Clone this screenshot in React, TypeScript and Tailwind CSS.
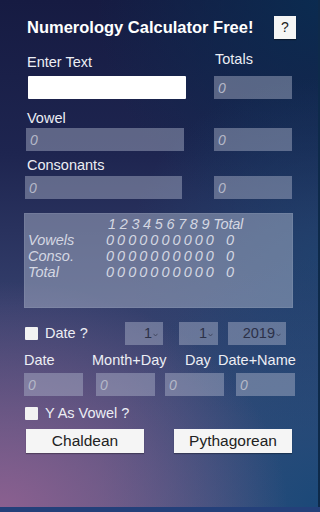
import React from "react";

const Field = ({ w, className = "" }: { w: string; className?: string }) => (
  <div className={`${w} h-[23px] bg-[rgba(175,182,205,0.45)] flex items-center pl-[4px] ${className}`}>
    <span className="italic text-[14px] text-[#b4b8c8] leading-none">0</span>
  </div>
);

const Check = () => <div className="w-[13px] h-[13px] bg-[#f2f2f2] rounded-[1px]" />;

const Drop = ({ w, v, className = "" }: { w: string; v: string; className?: string }) => (
  <div className={`${w} h-[23px] bg-[rgba(175,182,205,0.45)] flex items-center justify-end pr-[5px] ${className}`}>
    <span className="text-[14.5px] text-[#2c3148] leading-none">{v}</span>
    <svg width="5" height="4" viewBox="0 0 5 4" className="ml-[1px] mt-[2px]">
      <path d="M0.5 0.8 L2.5 3 L4.5 0.8" stroke="#3a3f55" strokeWidth="0.8" fill="none" />
    </svg>
  </div>
);

const Btn = ({ label }: { label: string }) => (
  <div className="w-[118px] h-[24px] bg-[#f5f5f5] flex items-center justify-center text-[15.5px] text-[#222] shadow-[0_1px_1px_rgba(0,0,0,0.3)]">
    {label}
  </div>
);

export default function App() {
  const zeros = "0 0 0 0 0 0 0 0 0 0";
  return (
    <div className="w-[320px] h-[512px] overflow-hidden relative font-['Liberation_Sans',Arial,sans-serif] text-[#eceef4] bg-[radial-gradient(90%_45%_at_0%_100%,#8c6090_0%,rgba(140,96,144,0)_100%),radial-gradient(70%_50%_at_100%_100%,#1a4878_0%,rgba(26,72,120,0)_100%),radial-gradient(60%_35%_at_100%_50%,rgba(30,68,112,0.8)_0%,rgba(30,68,112,0)_100%),radial-gradient(70%_45%_at_100%_0%,#0b2b50_0%,rgba(11,43,80,0)_100%),linear-gradient(180deg,#161b42_0%,#1e2550_30%,#343f6c_60%,#46557e_100%)]">
      <div className="flex flex-col">
        {/* title */}
        <div className="flex items-center mt-[16px] h-[23px]">
          <span className="ml-[27px] text-[16.5px] font-bold text-white leading-none">Numerology Calculator Free!</span>
          <div className="ml-auto mr-[24px] w-[22px] h-[23px] bg-[#f5f5f5] flex items-center justify-center text-[14px] text-[#222] shadow-[0_1px_1px_rgba(0,0,0,0.4)]">?</div>
        </div>
        {/* labels */}
        <div className="flex mt-[12px] h-[18px] text-[14.5px] leading-[16px]">
          <span className="ml-[27px] mt-[3px] w-[188px]">Enter Text</span>
          <span>Totals</span>
        </div>
        <div className="flex mt-[7px]">
          <div className="ml-[28px] w-[158px] h-[23px] bg-white rounded-[1px]" />
          <Field w="w-[78px]" className="ml-[28px]" />
        </div>
        <div className="mt-[11px] ml-[27px] text-[14.5px] leading-[16px]">Vowel</div>
        <div className="flex mt-[2px]">
          <Field w="w-[158px]" className="ml-[26px]" />
          <Field w="w-[78px]" className="ml-[30px]" />
        </div>
        <div className="mt-[6px] ml-[27px] text-[14.5px] leading-[16px]">Consonants</div>
        <div className="flex mt-[3px]">
          <Field w="w-[157px]" className="ml-[25px]" />
          <Field w="w-[78px]" className="ml-[32px]" />
        </div>
        {/* table */}
        <div className="mt-[14px] ml-[24px] w-[269px] h-[95px] bg-[rgba(185,192,212,0.45)] border border-[rgba(200,205,220,0.12)] pt-[2px] italic text-[14.5px] leading-[16px] text-[#d4d7e2]">
          <div className="flex">
            <span className="ml-[83px] tracking-[-0.2px]">1 2 3 4 5 6 7 8 9 Total</span>
          </div>
          {["Vowels", "Conso.", "Total"].map((l) => (
            <div key={l} className="flex">
              <span className="w-[81px] pl-[3px] shrink-0">{l}</span>
              <span className="w-[120px] shrink-0 tracking-[-0.5px]">{zeros}</span>
              <span>0</span>
            </div>
          ))}
        </div>
        {/* date row */}
        <div className="flex items-center mt-[14px] h-[23px]">
          <div className="ml-[25px]"><Check /></div>
          <span className="ml-[7px] w-[80px] text-[14.5px]">Date ?</span>
          <Drop w="w-[38px]" v="1" />
          <Drop w="w-[39px]" v="1" className="ml-[16px]" />
          <Drop w="w-[58px]" v="2019" className="ml-[10px]" />
        </div>
        <div className="flex mt-[7px] text-[14.5px] leading-[16px]">
          <span className="ml-[24px] w-[68px]">Date</span>
          <span className="w-[93px]">Month+Day</span>
          <span className="w-[33px]">Day</span>
          <span>Date+Name</span>
        </div>
        <div className="flex mt-[5px]">
          <Field w="w-[59px]" className="ml-[24px]" />
          <Field w="w-[59px]" className="ml-[13px]" />
          <Field w="w-[59px]" className="ml-[10px]" />
          <Field w="w-[59px]" className="ml-[12px]" />
        </div>
        <div className="flex items-center mt-[11px] h-[13px]">
          <div className="ml-[25px]"><Check /></div>
          <span className="ml-[7px] text-[14.5px]">Y As Vowel ?</span>
        </div>
        <div className="flex mt-[9px]">
          <div className="ml-[26px]"><Btn label="Chaldean" /></div>
          <div className="ml-[30px]"><Btn label="Pythagorean" /></div>
        </div>
      </div>
      <div className="absolute right-0 top-0 w-[2px] h-full bg-[#0e2a4a]" />
      <div className="absolute left-0 bottom-0 w-full h-[5px] bg-[#24407a]" />
    </div>
  );
}
